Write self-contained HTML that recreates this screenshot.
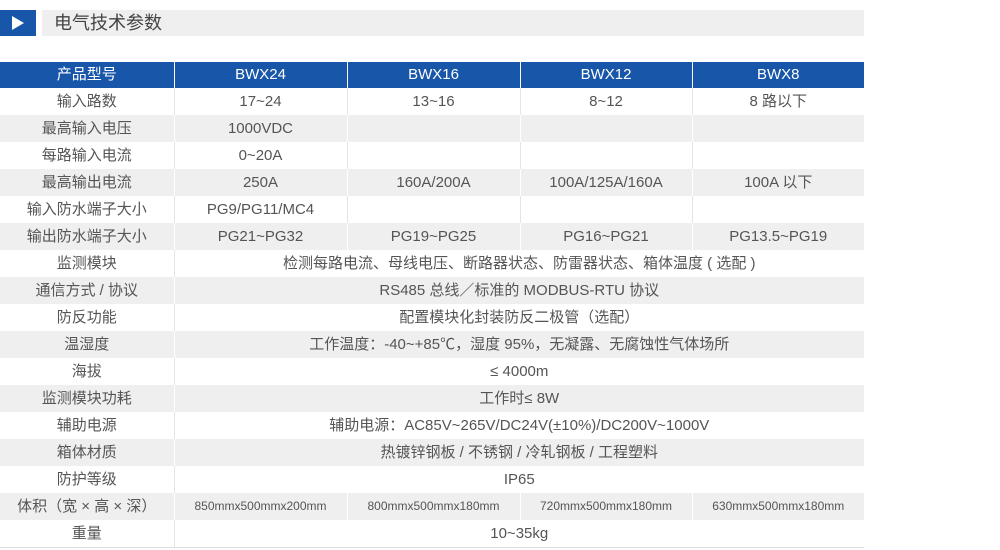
<!DOCTYPE html>
<html><head><meta charset="utf-8"><style>
body{margin:0;width:1000px;height:550px;background:#fff;font-family:"Liberation Sans","Noto Sans CJK SC",sans-serif;color:#555;position:relative;overflow:hidden}
.sq{position:absolute;left:0;top:10px;width:36px;height:26px;background:#1756a9}
.sq:after{content:"";position:absolute;left:12px;top:6px;border-left:12px solid #fff;border-top:7px solid transparent;border-bottom:7px solid transparent}
.bar{position:absolute;left:42px;top:10px;width:822px;height:26px;background:#efefef;font-size:18px;line-height:26px;color:#444;padding-left:12px;box-sizing:border-box}
table{position:absolute;left:0;top:62px;border-collapse:collapse;table-layout:fixed;width:864px}
td{height:27px;padding:0;text-align:center;font-size:15px;border-left:1px solid #e4e4e4;white-space:nowrap;line-height:27px}
td:first-child{border-left:none}
tr:nth-child(odd) td{background:#efefef;border-left-color:#fff}
tr.h td{background:#1756a9;color:#fff;border-left-color:#fff;height:26px;line-height:26px}
tr:last-child td{border-bottom:1px solid #ddd}
</style></head><body>
<div class="sq"></div><div class="bar">电气技术参数</div>
<table>
<colgroup><col style="width:174px"><col style="width:173px"><col style="width:173px"><col style="width:172px"><col style="width:172px"></colgroup>
<tr class="h"><td>产品型号</td><td>BWX24</td><td>BWX16</td><td>BWX12</td><td>BWX8</td></tr>
<tr><td>输入路数</td><td>17~24</td><td>13~16</td><td>8~12</td><td>8 路以下</td></tr>
<tr><td>最高输入电压</td><td>1000VDC</td><td></td><td></td><td></td></tr>
<tr><td>每路输入电流</td><td>0~20A</td><td></td><td></td><td></td></tr>
<tr><td>最高输出电流</td><td>250A</td><td>160A/200A</td><td>100A/125A/160A</td><td>100A 以下</td></tr>
<tr><td>输入防水端子大小</td><td>PG9/PG11/MC4</td><td></td><td></td><td></td></tr>
<tr><td>输出防水端子大小</td><td>PG21~PG32</td><td>PG19~PG25</td><td>PG16~PG21</td><td>PG13.5~PG19</td></tr>
<tr><td>监测模块</td><td colspan="4">检测每路电流、母线电压、断路器状态、防雷器状态、箱体温度 ( 选配 )</td></tr>
<tr><td>通信方式 / 协议</td><td colspan="4">RS485 总线／标准的 MODBUS-RTU 协议</td></tr>
<tr><td>防反功能</td><td colspan="4">配置模块化封装防反二极管（选配）</td></tr>
<tr><td>温湿度</td><td colspan="4">工作温度：-40~+85℃，湿度 95%，无凝露、无腐蚀性气体场所</td></tr>
<tr><td>海拔</td><td colspan="4">≤ 4000m</td></tr>
<tr><td>监测模块功耗</td><td colspan="4">工作时≤ 8W</td></tr>
<tr><td>辅助电源</td><td colspan="4">辅助电源：AC85V~265V/DC24V(±10%)/DC200V~1000V</td></tr>
<tr><td>箱体材质</td><td colspan="4">热镀锌钢板 / 不锈钢 / 冷轧钢板 / 工程塑料</td></tr>
<tr><td>防护等级</td><td colspan="4">IP65</td></tr>
<tr><td>体积（宽 × 高 × 深）</td><td style="font-size:12px">850mmx500mmx200mm</td><td style="font-size:12px">800mmx500mmx180mm</td><td style="font-size:12px">720mmx500mmx180mm</td><td style="font-size:12px">630mmx500mmx180mm</td></tr>
<tr><td>重量</td><td colspan="4">10~35kg</td></tr>
</table>
</body></html>
